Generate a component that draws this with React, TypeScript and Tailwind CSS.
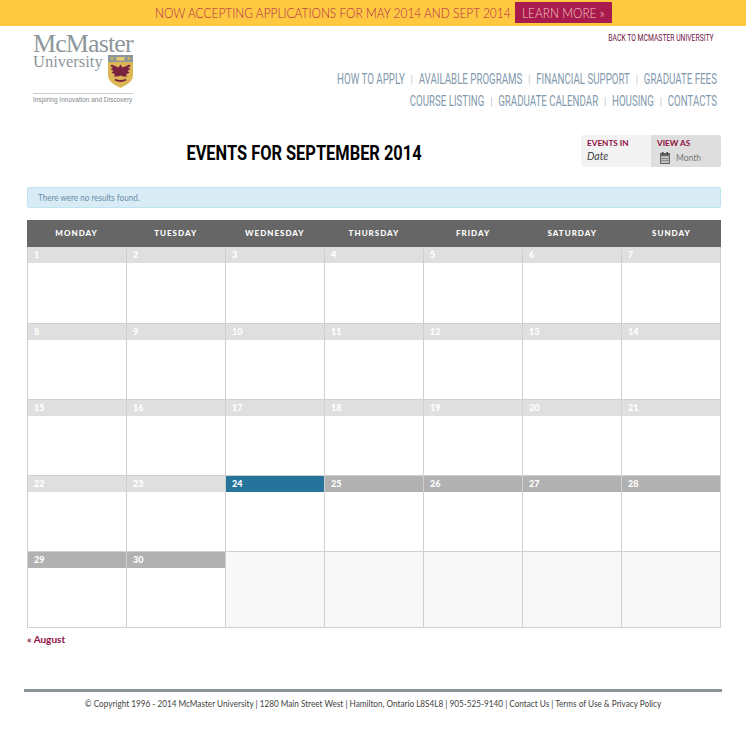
import React from "react";

const navTop = ["HOW TO APPLY", "AVAILABLE PROGRAMS", "FINANCIAL SUPPORT", "GRADUATE FEES"];
const navBottom = ["COURSE LISTING", "GRADUATE CALENDAR", "HOUSING", "CONTACTS"];
const days = ["MONDAY", "TUESDAY", "WEDNESDAY", "THURSDAY", "FRIDAY", "SATURDAY", "SUNDAY"];
const dates = Array.from({ length: 30 }, (_, i) => i + 1);

function Shield() {
  return (
    <svg width="25" height="33" viewBox="0 0 25 33" className="block">
      <path d="M0 0H25V20C25 27 18 30 12.5 33C7 30 0 27 0 20Z" fill="#dcb655" />
      <path d="M0 0H25V7H0Z" fill="#8e979b" />
      <rect x="8.5" y="2" width="8" height="3.5" fill="#e8c873" />
      <circle cx="4" cy="3.5" r="1.3" fill="#dcb655" />
      <circle cx="21" cy="3.5" r="1.3" fill="#dcb655" />
      <path d="M12.5 9.5L14.5 12.5L21.5 9.5L22.5 11L20 13L22.5 14L19.5 16L21.5 17.5L18 19.5L19 21.5L15 21.5L12.5 20.5L10 21.5L6 21.5L7 19.5L3.5 17.5L5.5 16L2.5 14L5 13L2.5 11L3.5 9.5L10.5 12.5Z" fill="#7a2140" />
      <path d="M7 24.5C10 26.5 15 26.5 18 24.5" stroke="#7a2140" strokeWidth="2" fill="none" />
    </svg>
  );
}

function Logo() {
  return (
    <div className="w-[100px] h-[72px] text-[#8d979c] font-['Liberation_Serif',serif]">
      <div className="text-[26px] leading-[20px] tracking-[-0.9px] whitespace-nowrap">McMaster</div>
      <div className="flex justify-between">
        <div className="text-[16.5px] leading-[15px] whitespace-nowrap">University</div>
        <div className="mt-[1px]"><Shield /></div>
      </div>
      <div className="border-t border-[#c9cdcf] mt-[5px] pt-[1px] text-[6.5px] leading-[9px] font-['Liberation_Sans',sans-serif] whitespace-nowrap text-[#7f878b]">
        Inspiring Innovation and Discovery
      </div>
    </div>
  );
}

function NavRow({ items }: { items: string[] }) {
  return (
    <div className="flex justify-end items-center h-[22px] origin-right scale-x-[0.67] whitespace-nowrap text-[14.5px] text-[#8299ad] font-['Roboto',sans-serif]">
      {items.map((item, i) => (
        <React.Fragment key={item}>
          {i > 0 && <span className="mx-[9px] text-[11px] text-[#9db0bf]">|</span>}
          <a href="#">{item}</a>
        </React.Fragment>
      ))}
    </div>
  );
}

function Cell({ date, row }: { date?: number; row: number }) {
  const today = date === 24;
  const future = date !== undefined && date > 24;
  const strip = today ? "bg-[#26739b]" : future ? "bg-[#b1b1b1]" : "bg-[#dfdfdf]";
  return (
    <div className={`${row === 0 ? "h-[77px]" : "h-[76px]"} border-b border-r border-[#cfcfcf] ${date ? "bg-white" : "bg-[#f8f8f8]"}`}>
      {date && (
        <div className={`h-[16px] pl-[6px] text-[9px] leading-[16px] font-black text-white ${strip}`}>{date}</div>
      )}
    </div>
  );
}

export default function App() {
  const cells: (number | undefined)[] = [...dates, ...Array(5).fill(undefined)];
  return (
    <div className="w-[746px] h-[738px] bg-white overflow-hidden font-['Lato',sans-serif]">
      {/* Banner */}
      <div className="h-[26px] bg-[#fec841] flex items-center pl-[155px] font-light text-[14.5px] whitespace-nowrap text-[#b22a4e]">
        <span className="block w-[354px] origin-left scale-x-[0.82]">NOW ACCEPTING APPLICATIONS FOR MAY 2014 AND SEPT 2014</span>
        <a href="#" className="ml-[6px] mt-[-1px] h-[21px] w-[97px] bg-[#a91b4c] text-[#f0c6c8] flex items-center justify-center">
          <span className="scale-x-[0.82]">LEARN MORE »</span>
        </a>
      </div>

      {/* Header */}
      <div className="h-[109px] pl-[33px] pr-[29px] flex justify-between">
        <div className="pt-[8px]"><Logo /></div>
        <div className="flex flex-col">
          <a href="#" className="self-end mr-[3px] mt-[6px] origin-right scale-x-[0.8] whitespace-nowrap text-[8.5px] leading-[12px] text-[#6f1245] font-['Roboto',sans-serif]">
            BACK TO MCMASTER UNIVERSITY
          </a>
          <div className="mt-[25px]"><NavRow items={navTop} /></div>
          <NavRow items={navBottom} />
        </div>
      </div>

      {/* Title */}
      <div className="h-[52px] pl-[27px] pr-[25px] flex items-start">
        <h1 className="w-[554px] text-center pt-[5px] scale-x-[0.82] whitespace-nowrap text-[20px] leading-[26px] font-bold text-black font-['Roboto',sans-serif]">
          EVENTS FOR SEPTEMBER 2014
        </h1>
        <div className="flex h-[32px] w-[140px] text-[8.2px] leading-[10px]">
          <div className="w-[70px] bg-[#f3f3f3] pl-[6px] pt-[3px] rounded-l-[2px]">
            <div className="font-bold text-[#8f0f3f]">EVENTS IN</div>
            <div className="italic text-[#444] text-[10.5px] mt-[3px]">Date</div>
          </div>
          <div className="w-[70px] bg-[#dedede] pl-[6px] pt-[3px] rounded-r-[2px]">
            <div className="font-bold text-[#8f0f3f]">VIEW AS</div>
            <div className="flex items-center gap-[6px] mt-[4px] pl-[3px] text-[8.5px] text-[#777]">
              <svg width="10" height="12" viewBox="0 0 10 12">
                <rect x="0" y="1" width="10" height="11" fill="#666" />
                <rect x="1" y="4" width="8" height="7" fill="#bbb" />
                <path d="M1 6.5H9M1 8.5H9" stroke="#777" strokeWidth="0.7" />
                <rect x="2" y="0" width="1.5" height="2.5" fill="#444" />
                <rect x="6.5" y="0" width="1.5" height="2.5" fill="#444" />
              </svg>
              <span>Month</span>
            </div>
          </div>
        </div>
      </div>

      {/* Notice */}
      <div className="ml-[27px] mr-[25px] h-[21px] bg-[#d9ebf5] border border-[#bfe3ef] rounded-[2px] pl-[10px] text-[9px] leading-[19px] text-[#6b8ea8]">
        <span className="block origin-left scale-x-[0.9] whitespace-nowrap">There were no results found.</span>
      </div>

      {/* Calendar */}
      <div className="ml-[27px] mt-[12px] w-[694px]">
        <div className="grid grid-cols-7 h-[27px] bg-[#666666]">
          {days.map((d) => (
            <div key={d} className="text-center text-[8px] leading-[27px] font-black tracking-[1px] text-white">{d}</div>
          ))}
        </div>
        <div className="grid grid-cols-7 border-l border-[#cfcfcf]">
          {cells.map((date, i) => (
            <Cell key={i} date={date} row={Math.floor(i / 7)} />
          ))}
        </div>
      </div>

      <a href="#" className="block ml-[27px] mt-[4px] text-[10px] leading-[14px] font-bold text-[#8f0f3f]">« August</a>

      {/* Footer */}
      <div className="mx-[24px] mt-[43px] border-t-[3px] border-[#8b9396] pt-[5px] text-center text-[9px] leading-[14px] text-[#444]">
        <div className="scale-x-[0.91] whitespace-nowrap">
          © Copyright 1996 - 2014 McMaster University | 1280 Main Street West | Hamilton, Ontario L8S4L8 | 905-525-9140 | Contact Us | Terms of Use &amp; Privacy Policy
        </div>
      </div>
    </div>
  );
}
